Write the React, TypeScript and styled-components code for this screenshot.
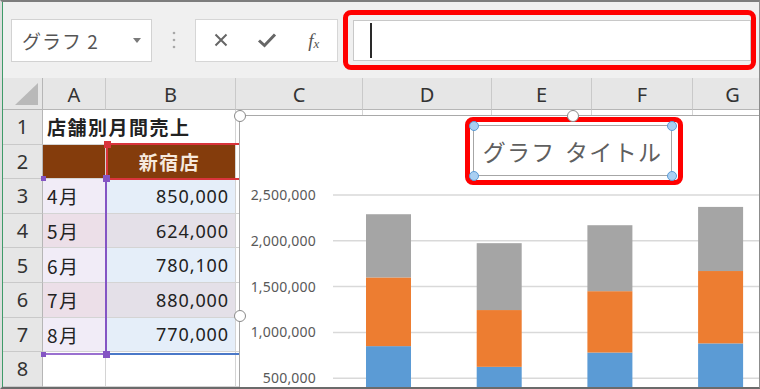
import React from "react";
import styled, { createGlobalStyle, css } from "styled-components";

const JP = `"Noto Sans CJK JP", "Noto Sans", sans-serif`;
const UI = `"Noto Sans", "Noto Sans CJK JP", sans-serif`;

const GlobalStyle = createGlobalStyle`
  html, body {
    margin: 0;
    padding: 0;
    background: #fff;
    overflow: hidden;
  }
  * {
    box-sizing: border-box;
  }
`;

const Frame = styled.div`
  width: 760px;
  height: 389px;
  display: flex;
  overflow: hidden;
  border-top: 2px solid #7d7d7d;
  border-bottom: 2px solid #6b6b6b;
  border-right: 1px solid #8c8c8c;
  border-left: 2px solid #dedede;
`;

const Window = styled.div`
  flex: 1;
  min-width: 0;
  display: flex;
  flex-direction: column;
  border-left: 1px solid #3f9b69;
`;

/* ---------- formula bar ---------- */

const Toolbar = styled.div`
  flex: none;
  height: 76px;
  display: flex;
  align-items: center;
  padding-left: 8px;
  background: #f0f0f0;
`;

const NameBox = styled.div`
  flex: none;
  width: 141px;
  height: 43px;
  display: flex;
  align-items: center;
  justify-content: space-between;
  padding: 0 10px;
  background: #fff;
  border: 1px solid #d2d2d2;
  font-family: ${JP};
  font-size: 19px;
  letter-spacing: 1px;
  color: #555;
`;

const Caret = styled.span`
  width: 0;
  height: 0;
  border-left: 4px solid transparent;
  border-right: 4px solid transparent;
  border-top: 5px solid #7a7a7a;
`;

const Grip = styled.div`
  flex: none;
  width: 43px;
  display: flex;
  justify-content: center;
`;

const ButtonBox = styled.div`
  flex: none;
  width: 143px;
  height: 43px;
  display: flex;
  align-items: center;
  padding-left: 2px;
  background: #fff;
  border: 1px solid #d6d6d6;
`;

const BarButton = styled.div`
  width: 50px;
  height: 100%;
  display: flex;
  align-items: center;
  justify-content: center;
  color: #666;
`;

const Fx = styled.span`
  font-family: "Liberation Serif", serif;
  font-style: italic;
  font-size: 19px;
  color: #555;
  line-height: 1;
  sub {
    font-size: 13px;
    vertical-align: -1px;
  }
`;

const Highlight = styled.div`
  border: 5px solid #ff0000;
  border-radius: 8px;
`;

const FormulaHighlight = styled(Highlight)`
  flex: none;
  width: 413px;
  height: 60px;
  margin-left: 5px;
  display: flex;
  padding: 5px 0 4px 5px;
`;

const FormulaInput = styled.div`
  flex: 1;
  display: flex;
  align-items: center;
  padding-left: 16px;
  background: #fff;
  border: 1px solid #c8c8c8;
`;

const TextCursor = styled.span`
  width: 2px;
  height: 35px;
  background: #2a2a2a;
`;

/* ---------- sheet ---------- */

const Sheet = styled.div`
  flex: 1;
  position: relative;
  overflow: hidden;
  background: #fff;
`;

const Grid = styled.div`
  display: grid;
  grid-template-columns: 40px 63px 130px 127px 129px 100px 101px 80px;
  grid-template-rows: 32px repeat(8, 34.6px);
`;

const Corner = styled.div`
  display: flex;
  align-items: flex-end;
  justify-content: flex-end;
  padding: 0 4px 4px 0;
  background: #e6e6e6;
  border-right: 1px solid #b6b6b6;
  border-bottom: 1px solid #b6b6b6;
`;

const CornerMark = styled.span`
  width: 0;
  height: 0;
  border-left: 23px solid transparent;
  border-bottom: 22px solid #b9b9b9;
`;

const ColHeader = styled.div`
  display: flex;
  align-items: center;
  justify-content: center;
  padding-top: 1px;
  background: #e6e6e6;
  border-right: 1px solid #c9c9c9;
  border-bottom: 1px solid #b6b6b6;
  font-family: ${UI};
  font-size: 20px;
  color: #333;
`;

const RowHeader = styled.div`
  display: flex;
  align-items: center;
  justify-content: center;
  background: #e6e6e6;
  border-right: 1px solid #b6b6b6;
  border-bottom: 1px solid #c9c9c9;
  font-family: ${UI};
  font-size: 20px;
  color: #333;
`;

const Cell = styled.div<{
  $bg?: string;
  $num?: boolean;
  $bold?: boolean;
  $center?: boolean;
  $color?: string;
  $span?: number;
}>`
  display: flex;
  align-items: center;
  min-width: 0;
  white-space: nowrap;
  padding: 0 6px 0 4px;
  background: ${(p) => p.$bg || "#fff"};
  border-right: 1px solid #d4d4d4;
  border-bottom: 1px solid #d4d4d4;
  color: ${(p) => p.$color || "#222"};
  font-family: ${JP};
  font-size: 19px;
  letter-spacing: 1.5px;
  font-weight: ${(p) => (p.$bold ? 700 : 400)};
  justify-content: ${(p) => (p.$center ? "center" : "flex-start")};
  ${(p) => p.$span && css`grid-column: span ${p.$span};`}
  ${(p) =>
    p.$num &&
    css`
      justify-content: flex-end;
      font-family: ${UI};
      font-size: 18px;
      letter-spacing: 0.9px;
    `}
`;

/* range highlights drawn over the cells */

const RangeHandle = styled.span<{ $color: string; $size: number; $x: "l" | "r"; $y: "t" | "b" }>`
  position: absolute;
  width: ${(p) => p.$size}px;
  height: ${(p) => p.$size}px;
  background: ${(p) => p.$color};
  ${(p) => (p.$x === "l" ? "left" : "right")}: ${(p) => -p.$size / 2 - 1}px;
  ${(p) => (p.$y === "t" ? "top" : "bottom")}: ${(p) => -p.$size / 2 - 1}px;
`;

const SeriesRange = styled.div`
  position: absolute;
  left: 103px;
  top: 65px;
  width: 136px;
  height: 37px;
  border: 2px solid #d9343c;
  border-right: none;
`;

const CategoryRange = styled.div`
  position: absolute;
  left: 41px;
  top: 101px;
  width: 63px;
  height: 176px;
  border-right: 2px solid #8455c4;
  border-bottom: 2px solid #9a70d0;
`;

const ValueRange = styled.div`
  position: absolute;
  left: 107px;
  top: 101px;
  width: 130px;
  height: 176px;
  border-bottom: 2px solid #4a78c8;
`;

/* ---------- chart ---------- */

const Chart = styled.div`
  position: absolute;
  left: 236px;
  top: 37px;
  right: -20px;
  bottom: -20px;
  background: #fff;
  border-left: 1px solid #a9a9a9;
  border-top: 1px solid #a9a9a9;
`;

const ChartHandle = styled.span<{ $left: number; $top: number }>`
  position: absolute;
  left: ${(p) => p.$left}px;
  top: ${(p) => p.$top}px;
  width: 12px;
  height: 12px;
  margin: -6px 0 0 -6px;
  border-radius: 50%;
  background: #fff;
  border: 1.5px solid #8a8a8a;
  z-index: 2;
`;

const TitleHighlight = styled(Highlight)`
  position: absolute;
  left: 225px;
  top: 1px;
  width: 218px;
  height: 68px;
  padding: 3px 6px 4px 3px;
`;

const TitleBox = styled.div`
  position: relative;
  height: 100%;
  display: flex;
  align-items: center;
  justify-content: center;
  border: 1px solid #a6a6a6;
  font-family: ${JP};
  font-size: 23px;
  letter-spacing: 1.3px;
  word-spacing: 3px;
  color: #5f5f5f;
`;

const TitleDot = styled.span<{ $x: "l" | "r"; $y: "t" | "b" }>`
  position: absolute;
  width: 10px;
  height: 10px;
  border-radius: 50%;
  background: #a9cff2;
  border: 1.5px solid #5b9bd5;
  ${(p) => (p.$x === "l" ? "left" : "right")}: -5.5px;
  ${(p) => (p.$y === "t" ? "top" : "bottom")}: -5.5px;
`;

const Plot = styled.svg`
  display: block;
`;

const cells = [
  { m: "4月", v: "850,000" },
  { m: "5月", v: "624,000" },
  { m: "6月", v: "780,100" },
  { m: "7月", v: "880,000" },
  { m: "8月", v: "770,000" },
];

const stacks = [
  [850000, 750000, 690000],
  [624000, 620000, 730000],
  [780100, 670000, 720000],
  [880000, 790000, 700000],
];
const seriesColors = ["#5b9bd5", "#ed7d31", "#a5a5a5"];

const ZERO_Y = 308;
const PX_PER = 45.8 / 500000;

const BarChart = () => {
  const ticks = [500000, 1000000, 1500000, 2000000, 2500000];
  return (
    <Plot width={520} height={272}>
      {ticks.map((t) => {
        const y = ZERO_Y - t * PX_PER;
        return (
          <g key={t}>
            <line x1={93} x2={520} y1={y} y2={y} stroke="#d9d9d9" strokeWidth={1.5} />
            <text
              x={76}
              y={y + 5}
              textAnchor="end"
              fontFamily='"Noto Sans", sans-serif'
              fontSize={14}
              letterSpacing={0.2}
              fill="#595959"
            >
              {t.toLocaleString("en-US")}
            </text>
          </g>
        );
      })}
      {stacks.map((vals, i) => {
        let base = ZERO_Y;
        const x = 126 + i * 110.7;
        return (
          <g key={i}>
            {vals.map((v, j) => {
              const h = v * PX_PER;
              base -= h;
              return <rect key={j} x={x} y={base} width={45} height={h} fill={seriesColors[j]} />;
            })}
          </g>
        );
      })}
    </Plot>
  );
};

const Grid8 = () => {
  const cols = ["A", "B", "C", "D", "E", "F", "G"];
  const blank = (n: number, key: string) =>
    Array.from({ length: n }, (_, i) => <Cell key={`${key}${i}`} />);
  return (
    <Grid>
      <Corner>
        <CornerMark />
      </Corner>
      {cols.map((c) => (
        <ColHeader key={c}>{c}</ColHeader>
      ))}

      <RowHeader>1</RowHeader>
      <Cell $span={2} $bold>
        店舗別月間売上
      </Cell>
      {blank(5, "r1")}

      <RowHeader>2</RowHeader>
      <Cell $bg="#843c0c" />
      <Cell $bg="#843c0c" $center $bold $color="#f6e9de">
        新宿店
      </Cell>
      {blank(5, "r2")}

      {cells.map((r, i) => (
        <React.Fragment key={r.m}>
          <RowHeader>{i + 3}</RowHeader>
          <Cell $bg={i % 2 ? "#ecdfe8" : "#f1ecf7"}>{r.m}</Cell>
          <Cell $num $bg={i % 2 ? "#e4e0e8" : "#e5eef9"}>
            {r.v}
          </Cell>
          {blank(5, `r${i + 3}`)}
        </React.Fragment>
      ))}

      <RowHeader>8</RowHeader>
      {blank(7, "r8")}
    </Grid>
  );
};

const App = () => {
  return (
    <>
      <GlobalStyle />
      <Frame>
        <Window>
          <Toolbar>
            <NameBox>
              グラフ 2
              <Caret />
            </NameBox>
            <Grip>
              <svg width="4" height="18" viewBox="0 0 4 18">
                <circle cx="2" cy="2" r="1.3" fill="#a8a8a8" />
                <circle cx="2" cy="9" r="1.3" fill="#a8a8a8" />
                <circle cx="2" cy="16" r="1.3" fill="#a8a8a8" />
              </svg>
            </Grip>
            <ButtonBox>
              <BarButton>
                <svg width="16" height="16" viewBox="0 0 16 16">
                  <path d="M2.5 2.5L13.5 13.5M13.5 2.5L2.5 13.5" stroke="#666" strokeWidth="2" />
                </svg>
              </BarButton>
              <BarButton>
                <svg width="20" height="16" viewBox="0 0 20 16">
                  <path d="M2 8.5L7.5 13.5L18 2.5" stroke="#666" strokeWidth="3" fill="none" />
                </svg>
              </BarButton>
              <BarButton>
                <Fx>
                  f<sub>x</sub>
                </Fx>
              </BarButton>
            </ButtonBox>
            <FormulaHighlight>
              <FormulaInput>
                <TextCursor />
              </FormulaInput>
            </FormulaHighlight>
          </Toolbar>

          <Sheet>
            <Grid8 />
            <SeriesRange>
              <RangeHandle $color="#d9343c" $size={7} $x="l" $y="t" />
            </SeriesRange>
            <ValueRange />
            <CategoryRange>
              <RangeHandle $color="#8455c4" $size={5} $x="l" $y="t" />
              <RangeHandle $color="#8455c4" $size={7} $x="r" $y="t" />
              <RangeHandle $color="#8455c4" $size={5} $x="l" $y="b" />
              <RangeHandle $color="#8455c4" $size={7} $x="r" $y="b" />
            </CategoryRange>
            <Chart>
              <ChartHandle $left={0} $top={0} />
              <ChartHandle $left={333} $top={0} />
              <ChartHandle $left={0} $top={200} />
              <BarChart />
              <TitleHighlight>
                <TitleBox>
                  グラフ タイトル
                  <TitleDot $x="l" $y="t" />
                  <TitleDot $x="r" $y="t" />
                  <TitleDot $x="l" $y="b" />
                  <TitleDot $x="r" $y="b" />
                </TitleBox>
              </TitleHighlight>
            </Chart>
          </Sheet>
        </Window>
      </Frame>
    </>
  );
};

export default App;
